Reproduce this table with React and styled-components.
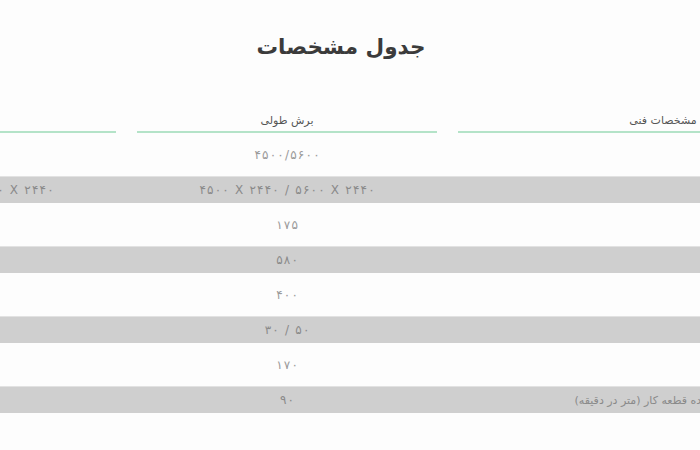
import React from "react";
import styled, { createGlobalStyle } from "styled-components";

const Global = createGlobalStyle`
  html, body { margin: 0; padding: 0; background: #fdfdfd; }
  body { font-family: "DejaVu Sans", "Noto Sans", sans-serif; }
`;

const Page = styled.div`
  width: 700px;
  height: 450px;
  overflow: hidden;
  direction: rtl;
  background: #fdfdfd;
`;

const Title = styled.h2`
  margin: 32px 0 0;
  padding-right: 18px;
  text-align: center;
  font-size: 21.5px;
  line-height: 30px;
  font-weight: 700;
  color: #3b3b3b;
`;

const Table = styled.div`
  width: 1052px;
  margin-right: -168px;
  margin-top: 51px;
`;

const Row = styled.div`
  display: grid;
  grid-template-columns: 410px 300px 300px;
  column-gap: 21px;
  height: ${(p) => (p.$shade ? "27px" : "43px")};
  background: ${(p) => (p.$shade ? "#cfcfcf" : "transparent")};
  border-top: ${(p) => (p.$shade ? "1px solid #e2e2e2" : "0")};
  box-sizing: border-box;
`;

const HeadRow = styled.div`
  display: grid;
  grid-template-columns: 410px 300px 300px;
  column-gap: 21px;
`;

const HeadCell = styled.div`
  text-align: center;
  font-size: 11px;
  line-height: 16px;
  padding-bottom: 2px;
  color: #555;
  border-bottom: 2px solid #b4e3c8;
`;

const Cell = styled.div`
  display: flex;
  align-items: center;
  justify-content: center;
  color: ${(p) => (p.$shade ? "#8a8a8a" : "#9a9a9a")};
  white-space: pre;
`;

const Label = styled(Cell)`
  justify-content: flex-start;
  padding-right: 59px;
  font-size: 11px;
`;

const Value = styled.span`
  direction: ltr;
  unicode-bidi: isolate;
  font-size: 12px;
`;

/* Persian digits do not take letter-spacing, so each glyph gets its own tracking */
const Glyph = styled.span`
  margin: 0 0.6px;
`;

const heads = ["مشخصات فنی", "برش طولی", "برش عرضی"];

const rows = [
  ["", "۴۵۰۰/۵۶۰۰", ""],
  ["", "۴۵۰۰ X ۲۴۴۰ / ۵۶۰۰ X ۲۴۴۰", "۴۵۰۰ X ۲۴۴۰ / ۵۶۰۰ X ۲۴۴۰"],
  ["", "۱۷۵", ""],
  ["", "۵۸۰", ""],
  ["", "۴۰۰", ""],
  ["", "۳۰ / ۵۰", ""],
  ["", "۱۷۰", ""],
  ["سرعت حرکت تغذیه کننده قطعه کار (متر در دقیقه)", "۹۰", ""],
];

function Tracked({ text }) {
  return (
    <Value>
      {Array.from(text).map((ch, k) => (
        <Glyph key={k}>{ch}</Glyph>
      ))}
    </Value>
  );
}

export default function App() {
  return (
    <>
      <Global />
      <Page>
        <Title>جدول مشخصات</Title>
        <Table>
          <HeadRow>
            {heads.map((h) => (
              <HeadCell key={h}>{h}</HeadCell>
            ))}
          </HeadRow>
          {rows.map((r, i) => {
            const shade = i % 2 === 1;
            return (
              <Row key={i} $shade={shade}>
                <Label $shade={shade}>{r[0]}</Label>
                {r.slice(1).map((c, j) => (
                  <Cell key={j} $shade={shade}>
                    <Tracked text={c} />
                  </Cell>
                ))}
              </Row>
            );
          })}
        </Table>
      </Page>
    </>
  );
}
